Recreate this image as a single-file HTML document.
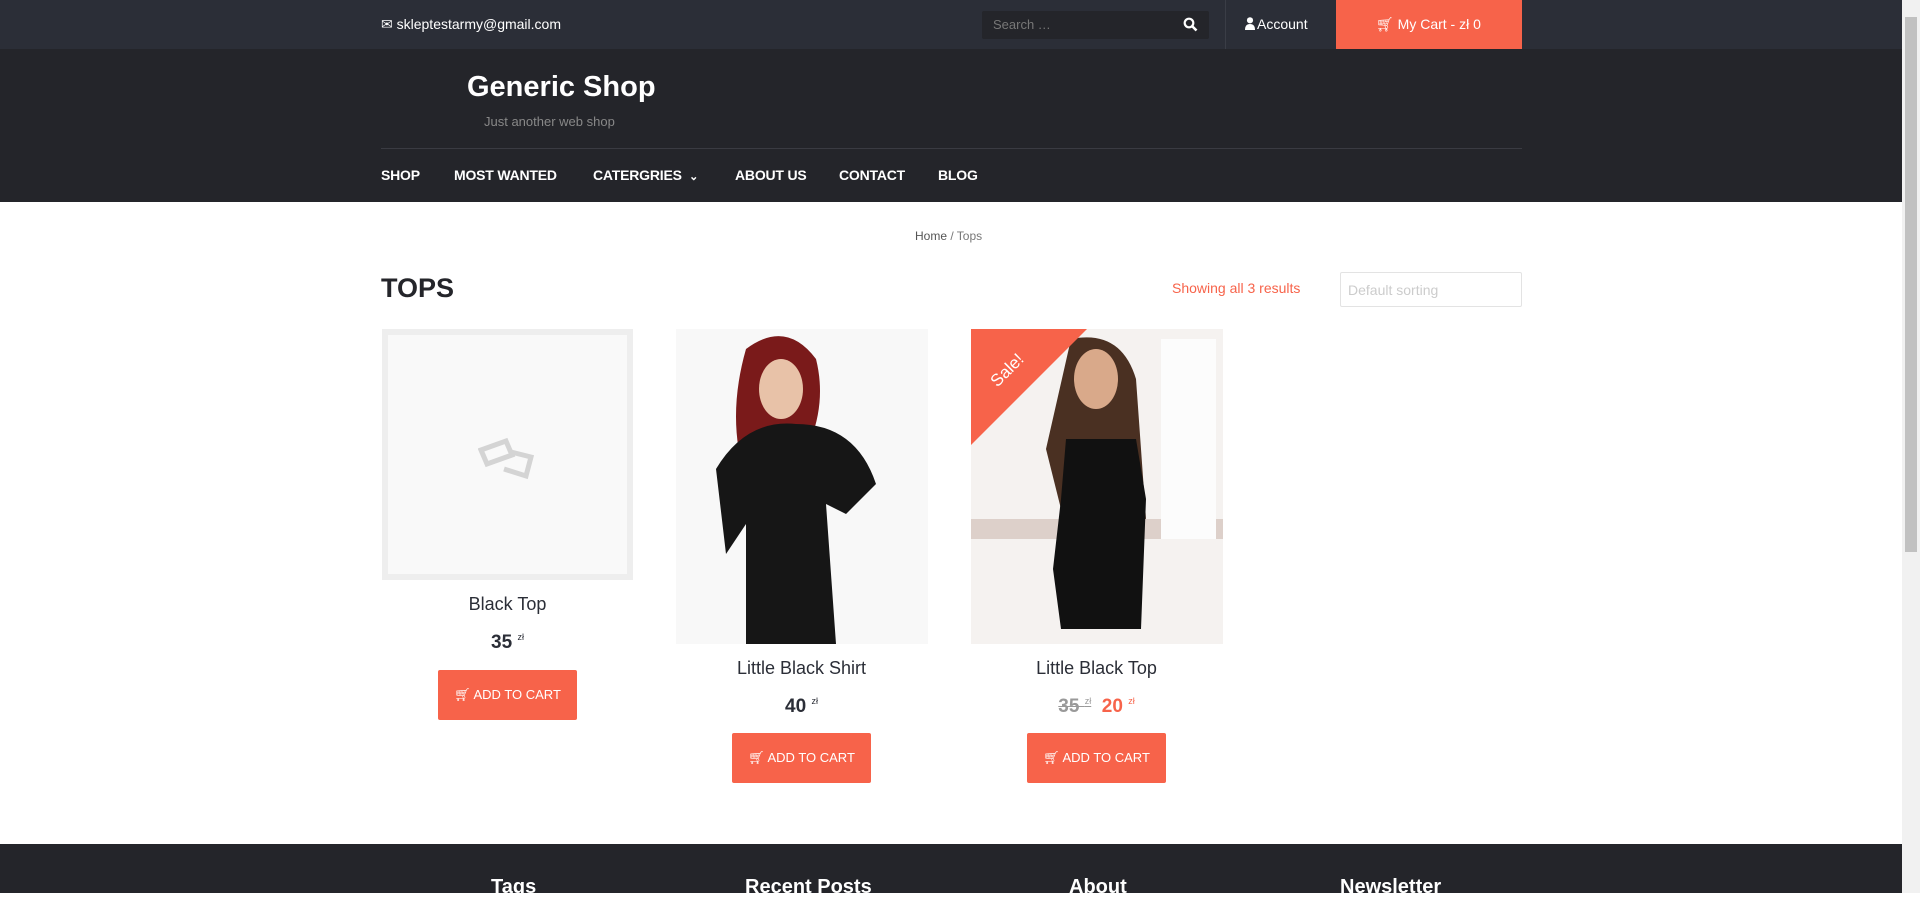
<!DOCTYPE html>
<html><head><meta charset="utf-8"><style>
*{margin:0;padding:0;box-sizing:border-box}
body{width:1920px;height:893px;overflow:hidden;background:#fff;font-family:"Liberation Sans",sans-serif;position:relative}
.a{position:absolute}
.top{left:0;top:0;width:1902px;height:49px;background:#2b2e37}
.hdr{left:0;top:49px;width:1902px;height:153px;background:#24252a}
.w{color:#fff}
.nav{top:167px;font-size:14px;font-weight:bold;color:#fff;letter-spacing:-0.2px}
.btn{background:#f7634a;color:#fff;font-size:13px;border-radius:2px;text-align:center;line-height:50px;height:50px;width:139px}
.t{font-size:18px;color:#2b2e37;text-align:center;width:251px}
.p{font-size:19px;font-weight:bold;color:#2b2e37;text-align:center;width:251px}
.p sup{font-size:9px;font-weight:normal;vertical-align:8px}
.fh{top:876px;font-size:20px;font-weight:bold;color:#fff}
</style></head><body>
<div class="a top"></div>
<div class="a w" style="left:381px;top:16px;font-size:14px">&#9993; skleptestarmy@gmail.com</div>
<div class="a" style="left:982px;top:11px;width:227px;height:28px;background:#24252a;border-radius:2px"></div>
<div class="a" style="left:993px;top:17px;font-size:13px;color:#777">Search …</div>
<svg class="a" style="left:1183px;top:17px" width="15" height="15" viewBox="0 0 15 15"><circle cx="6" cy="6" r="4.3" fill="none" stroke="#fff" stroke-width="2.2"/><path d="M9 9l4.5 4.5" stroke="#fff" stroke-width="2.6"/></svg>
<div class="a" style="left:1225px;top:0;width:1px;height:49px;background:#3a3d46"></div>
<svg class="a" style="left:1245px;top:17px" width="10" height="13" viewBox="0 0 10 13"><circle cx="5" cy="3.3" r="3.1" fill="#fff"/><path d="M0 13q0-6 5-6t5 6z" fill="#fff"/></svg>
<div class="a w" style="left:1257px;top:16px;font-size:14px">Account</div>
<div class="a" style="left:1336px;top:0;width:186px;height:49px;background:#f7634a"></div>
<div class="a w" style="left:1376px;top:16px;font-size:14px">&#128722;&#xFE0E; My Cart - zł 0</div>
<div class="a hdr"></div>
<div class="a w" style="left:467px;top:71px;font-size:29px;font-weight:bold">Generic Shop</div>
<div class="a" style="left:484px;top:114px;font-size:13px;color:#888">Just another web shop</div>
<div class="a" style="left:381px;top:148px;width:1141px;height:1px;background:#3a3b42"></div>
<div class="a nav" style="left:381px">SHOP</div>
<div class="a nav" style="left:454px">MOST WANTED</div>
<div class="a nav" style="left:593px">CATERGRIES &nbsp;<span style="font-size:11px">&#8964;</span></div>
<div class="a nav" style="left:735px">ABOUT US</div>
<div class="a nav" style="left:839px">CONTACT</div>
<div class="a nav" style="left:938px">BLOG</div>
<div class="a" style="left:915px;top:229px;font-size:12px;color:#777"><span style="color:#555">Home</span> / Tops</div>
<div class="a" style="left:381px;top:273px;font-size:27px;font-weight:bold;color:#24252a">TOPS</div>
<div class="a" style="left:1172px;top:280px;font-size:14px;color:#f7634a">Showing all 3 results</div>
<div class="a" style="left:1340px;top:272px;width:182px;height:35px;border:1px solid #e3e3e3;border-radius:2px;font-size:14px;color:#ccc;padding:9px 7px">Default sorting</div>
<div class="a" style="left:382px;top:329px;width:251px;height:251px;border:6px solid #eee;background:#f9f9f9"></div>
<svg class="a" style="left:478px;top:434px" width="60" height="46" viewBox="0 0 60 46"><path d="M3 16l25-9 6 14-25 9z" fill="none" stroke="#d4d4d4" stroke-width="5"/><path d="M33 18l20 5-5 19-22-7" fill="none" stroke="#d4d4d4" stroke-width="5"/></svg>
<div class="a t" style="left:382px;top:594px">Black Top</div>
<div class="a p" style="left:382px;top:632px">35 <sup>zł</sup></div>
<div class="a btn" style="left:438px;top:670px">&#128722;&#xFE0E; ADD TO CART</div>
<svg class="a" style="left:676px;top:329px" width="252" height="315" viewBox="0 0 252 315"><rect width="252" height="315" fill="#f8f8f8"/><path d="M70 20q40-30 70 10 10 40-5 80l-5 60q-30 10-60-20-20-60 0-130z" fill="#7a1a1a"/><ellipse cx="105" cy="60" rx="22" ry="30" fill="#e8c2a8"/><path d="M40 140q30-50 80-45 60 0 80 60l-30 30-20-10 10 140H70l0-120-20 30z" fill="#161616"/></svg>
<div class="a t" style="left:676px;top:658px">Little Black Shirt</div>
<div class="a p" style="left:676px;top:696px">40 <sup>zł</sup></div>
<div class="a btn" style="left:732px;top:733px">&#128722;&#xFE0E; ADD TO CART</div>
<svg class="a" style="left:971px;top:329px" width="252" height="315" viewBox="0 0 252 315"><rect width="252" height="315" fill="#f5f2f0"/><rect x="0" y="190" width="252" height="20" fill="#ddd0ca"/><rect x="190" y="10" width="55" height="200" fill="#fcfcfc"/><path d="M100 10q50-10 65 40l10 140-40-10-40 20-20-80z" fill="#4a3022"/><ellipse cx="125" cy="50" rx="22" ry="30" fill="#d9a98a"/><path d="M95 110h70l10 60-5 130H90l-8-60 8-70z" fill="#111"/><path d="M0 0h116L0 116z" fill="#f7634a"/><text x="40" y="45" transform="rotate(-45 40 45)" fill="#fff" font-size="17" font-family="Liberation Sans" text-anchor="middle">Sale!</text></svg>
<div class="a t" style="left:971px;top:658px">Little Black Top</div>
<div class="a p" style="left:971px;top:696px"><span style="color:#999;text-decoration:line-through">35 <sup>zł</sup></span> &nbsp;<span style="color:#f7634a">20 <sup>zł</sup></span></div>
<div class="a btn" style="left:1027px;top:733px">&#128722;&#xFE0E; ADD TO CART</div>
<div class="a" style="left:0;top:844px;width:1902px;height:49px;background:#24252a"></div>
<div class="a fh" style="left:491px">Tags</div>
<div class="a fh" style="left:745px">Recent Posts</div>
<div class="a fh" style="left:1069px">About</div>
<div class="a fh" style="left:1340px">Newsletter</div>
<div class="a" style="left:1902px;top:0;width:18px;height:893px;background:#f1f1f1"></div>
<div class="a" style="left:1905px;top:17px;width:12px;height:535px;background:#c1c1c1"></div>
</body></html>
